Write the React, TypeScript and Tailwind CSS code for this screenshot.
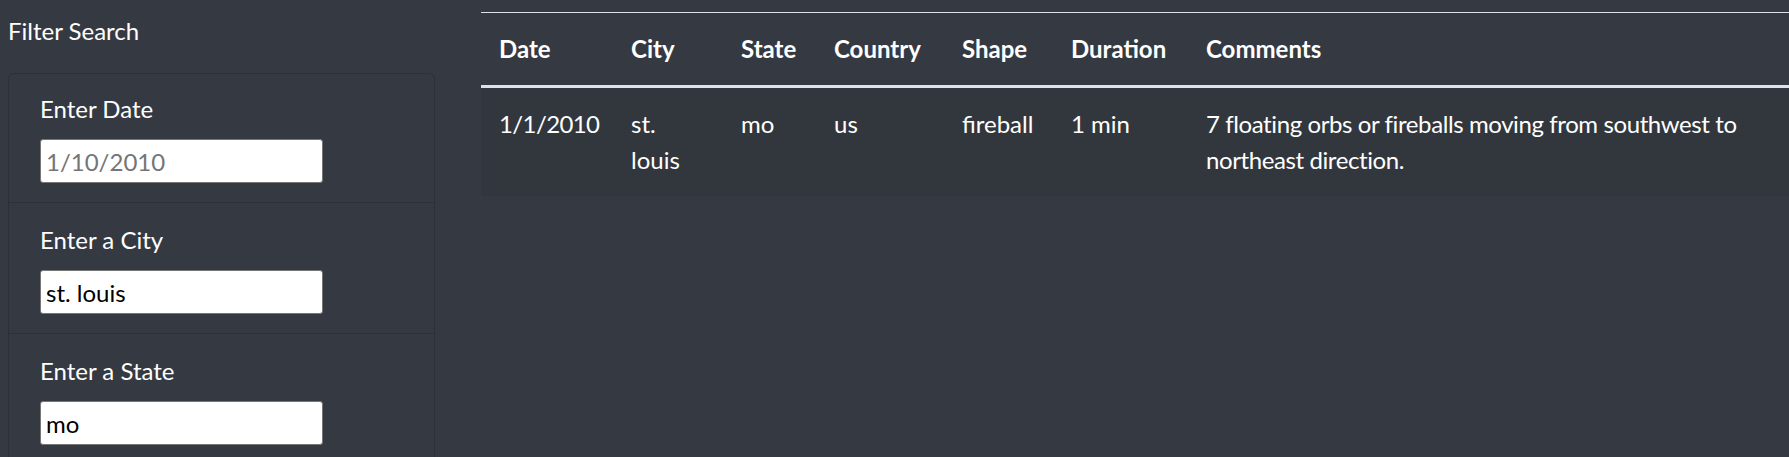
import { useState } from "react";

const filters = [
    { id: "datetime", label: "Enter Date", placeholder: "1/10/2010", value: "" },
    { id: "city", label: "Enter a City", placeholder: "", value: "st. louis" },
    { id: "state", label: "Enter a State", placeholder: "", value: "mo" },
];

const sightings = [
    {
        datetime: "1/1/2010",
        city: "st. louis",
        state: "mo",
        country: "us",
        shape: "fireball",
        durationMinutes: "1 min",
        comments: "7 floating orbs or fireballs moving from southwest to northeast direction.",
    },
];

export default function App() {
    const [formData, setFormData] = useState<Record<string, string>>(
        Object.fromEntries(filters.map((f) => [f.id, f.value]))
    );

    const handleChange = (e: React.ChangeEvent<HTMLInputElement>) => {
        setFormData({ ...formData, [e.target.name]: e.target.value });
    };

    return (
        <div className="h-screen overflow-hidden flex bg-[#353a42] text-white font-['Lato','Open_Sans',sans-serif]">
            <aside className="w-[435px] shrink-0 pl-[8px] pt-[13px]">
                <h2 className="text-[24px] leading-[36px] mb-[24px]">Filter Search</h2>
                <ul className="border border-[#2c3037] rounded-[6px]">
                    {filters.map((f, i) => (
                        <li
                            key={f.id}
                            className={
                                i === 0
                                    ? "px-[31px] pt-[17px] pb-[19px]"
                                    : "px-[31px] pt-[19px] pb-[19px] border-t border-[#2c3037]"
                            }
                        >
                            <label htmlFor={f.id} className="block text-[24px] leading-[36px] mb-[12px]">
                                {f.label}
                            </label>
                            <input
                                id={f.id}
                                name={f.id}
                                type="text"
                                value={formData[f.id]}
                                placeholder={f.placeholder}
                                onChange={handleChange}
                                className="block w-[283px] h-[44px] border border-[#767676] rounded-[3px] bg-white px-[5px] text-[24px] text-black placeholder:text-[#757575] outline-none"
                            />
                        </li>
                    ))}
                </ul>
            </aside>

            <main className="flex-1 ml-[46px] pt-[12px]">
                <table className="w-full table-fixed border-separate border-spacing-0 text-[24px] leading-[36px]">
                    <colgroup>
                        <col className="w-[132px]" />
                        <col className="w-[110px]" />
                        <col className="w-[93px]" />
                        <col className="w-[128px]" />
                        <col className="w-[109px]" />
                        <col className="w-[135px]" />
                        <col />
                    </colgroup>
                    <thead>
                        <tr>
                            {["Date", "City", "State", "Country", "Shape", "Duration", "Comments"].map((h) => (
                                <th
                                    key={h}
                                    className="text-left font-bold align-bottom p-[18px] border-t border-b-[3px] border-[#dee2e6]"
                                >
                                    {h}
                                </th>
                            ))}
                        </tr>
                    </thead>
                    <tbody>
                        {sightings.map((s, i) => (
                            <tr key={i} className="bg-black/5">
                                <td className="align-top p-[18px] tracking-[-0.6px]">{s.datetime}</td>
                                <td className="align-top p-[18px]">{s.city}</td>
                                <td className="align-top p-[18px]">{s.state}</td>
                                <td className="align-top p-[18px]">{s.country}</td>
                                <td className="align-top p-[18px]">{s.shape}</td>
                                <td className="align-top p-[18px]">{s.durationMinutes}</td>
                                <td className="align-top p-[18px] tracking-[-0.4px]">{s.comments}</td>
                            </tr>
                        ))}
                    </tbody>
                </table>
            </main>
        </div>
    );
}
